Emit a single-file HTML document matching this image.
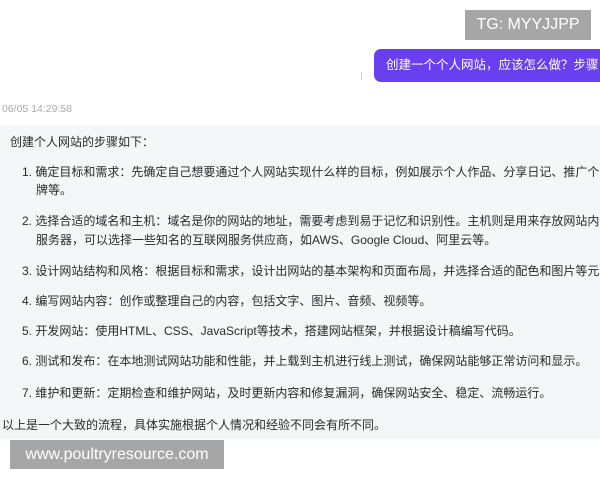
<!DOCTYPE html>
<html><head><meta charset="utf-8"><style>
html,body{margin:0;padding:0;width:600px;height:480px;overflow:hidden;background:#fff;}
#w{position:relative;width:600px;height:480px;overflow:hidden;font-family:"Liberation Sans","Noto Sans CJK SC",sans-serif;}
.a{position:absolute;white-space:nowrap;}
.t{font-size:12px;color:#2a2a2a;line-height:16px;max-width:580px;overflow:hidden;}
</style></head><body><div id="w">
<div class="a" style="left:465px;top:10px;width:126px;height:30px;background:#a6a6a6;color:#fff;font-size:16px;line-height:30px;text-align:center;">TG: MYYJJPP</div>
<div class="a" style="left:361px;top:72px;width:2px;height:8px;border-left:1px dotted #bbb;"></div>
<div class="a" style="left:374px;top:49px;width:226px;height:33px;background:#6a3ff0;border-radius:7px 0 0 7px;color:#fff;font-size:12.5px;line-height:33px;padding-left:12px;box-sizing:border-box;overflow:hidden;">创建一个个人网站，应该怎么做？步骤</div>
<div class="a" style="left:2px;top:103px;font-size:10.5px;color:#aaa;">06/05 14:29:58</div>
<div class="a" style="left:0;top:125px;width:600px;height:314px;background:#f5f6f7;"></div>
<div class="a t" style="left:10px;top:134px;">创建个人网站的步骤如下：</div>
<div class="a t" style="left:22px;top:164px;width:578px;">1. 确定目标和需求：先确定自己想要通过个人网站实现什么样的目标，例如展示个人作品、分享日记、推广个人品</div>
<div class="a t" style="left:36px;top:182px;">牌等。</div>
<div class="a t" style="left:22px;top:213px;width:578px;">2. 选择合适的域名和主机：域名是你的网站的地址，需要考虑到易于记忆和识别性。主机则是用来存放网站内容的</div>
<div class="a t" style="left:36px;top:232px;">服务器，可以选择一些知名的互联网服务供应商，如AWS、Google Cloud、阿里云等。</div>
<div class="a t" style="left:22px;top:263px;width:578px;">3. 设计网站结构和风格：根据目标和需求，设计出网站的基本架构和页面布局，并选择合适的配色和图片等元素。</div>
<div class="a t" style="left:22px;top:293px;">4. 编写网站内容：创作或整理自己的内容，包括文字、图片、音频、视频等。</div>
<div class="a t" style="left:22px;top:323px;">5. 开发网站：使用HTML、CSS、JavaScript等技术，搭建网站框架，并根据设计稿编写代码。</div>
<div class="a t" style="left:22px;top:353px;">6. 测试和发布：在本地测试网站功能和性能，并上载到主机进行线上测试，确保网站能够正常访问和显示。</div>
<div class="a t" style="left:22px;top:385px;">7. 维护和更新：定期检查和维护网站，及时更新内容和修复漏洞，确保网站安全、稳定、流畅运行。</div>
<div class="a t" style="left:2px;top:417px;">以上是一个大致的流程，具体实施根据个人情况和经验不同会有所不同。</div>
<div class="a" style="left:10px;top:440px;width:214px;height:29px;background:#a6a6a6;color:#fff;font-size:16px;line-height:29px;text-align:center;">www.poultryresource.com</div>
</div></body></html>
